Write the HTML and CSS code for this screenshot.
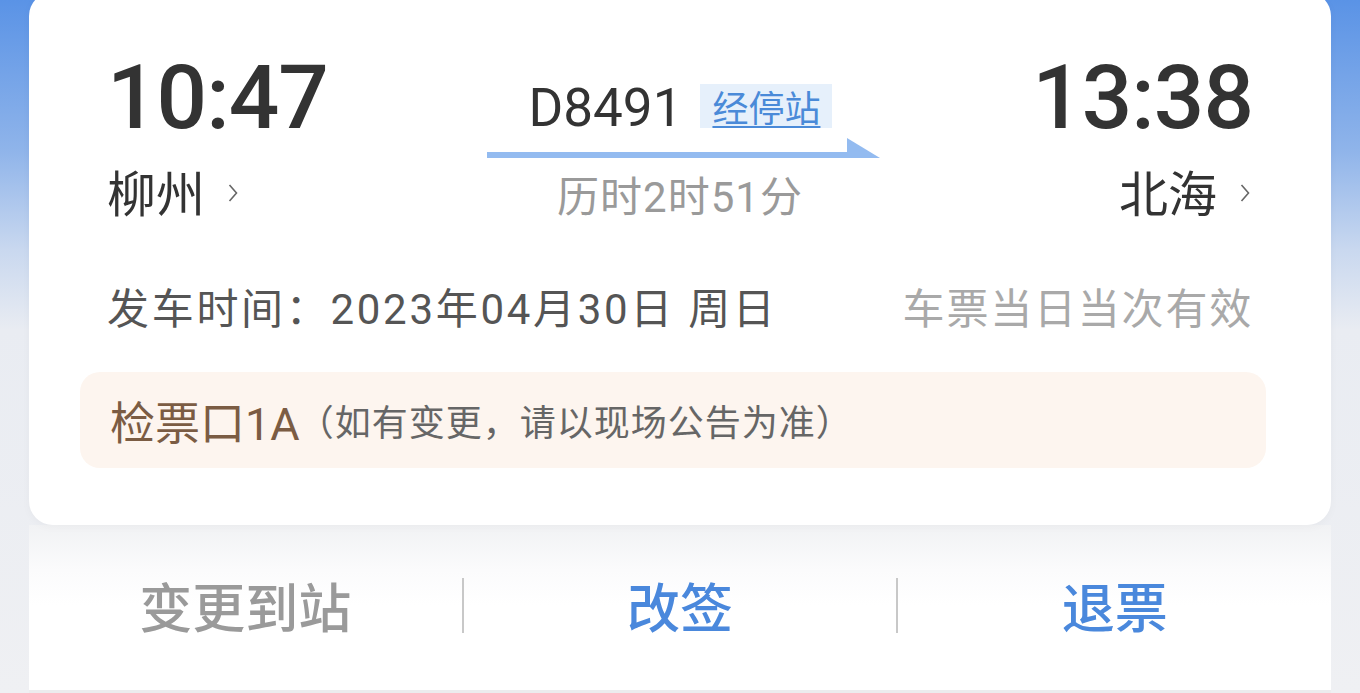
FILE: index.html
```html
<!DOCTYPE html>
<html lang="zh-CN">

<head>
  <meta charset="utf-8">
  <link rel="stylesheet" href="styles.css">
</head>

<body>
  <div class="page">
    <div class="ticket">
      <div class="route">
        <div class="stop">
          <div class="time">10:47</div>
          <div class="station">柳州
            <svg class="chevron" width="10" height="22" viewBox="0 0 10 22"><path d="M1.5 3 L8.5 11 L1.5 19" fill="none" stroke="#666" stroke-width="1.6"/></svg>
          </div>
        </div>

        <div class="train">
          <div class="train-head">
            <span class="train-no">D8491</span>
            <a class="stops" href="#">经停站</a>
          </div>
          <svg class="arrow" width="393" height="21" viewBox="0 0 393 21">
            <rect x="0" y="14" width="372" height="6" fill="#93bbf0"/>
            <polygon points="360,0 393,20 360,20" fill="#93bbf0"/>
          </svg>
          <div class="duration">历时2时51分</div>
        </div>

        <div class="stop stop-end">
          <div class="time">13:38</div>
          <div class="station">北海
            <svg class="chevron" width="10" height="22" viewBox="0 0 10 22"><path d="M1.5 3 L8.5 11 L1.5 19" fill="none" stroke="#666" stroke-width="1.6"/></svg>
          </div>
        </div>
      </div>

      <div class="date-row">
        <span class="depart">发车时间：2023年04月30日 周日</span>
        <span class="valid">车票当日当次有效</span>
      </div>

      <div class="gate">
        <span class="gate-no">检票口1A</span>
        <span class="gate-note">（如有变更，请以现场公告为准）</span>
      </div>
    </div>

    <div class="actions">
      <div class="action muted">变更到站</div>
      <div class="divider"></div>
      <div class="action">改签</div>
      <div class="divider"></div>
      <div class="action">退票</div>
    </div>
  </div>
</body>

</html>
```

FILE: styles.css
```css
body {
  margin: 0;
  height: 693px;
  overflow: hidden;
  font-family: Roboto, "Noto Sans CJK SC", sans-serif;
  color: #333;
  background: linear-gradient(180deg, #5a93e6 0px, #8fb4ea 150px, #c9d8ef 250px, #e9ecf2 330px, #eff0f3 693px);
}

.page {
  padding: 0 29px;
}

.ticket {
  margin-top: -8px;
  padding: 61px 78px 57px 78px;
  background-color: #fff;
  border-radius: 24px;
  box-shadow: 0 2px 10px rgba(0, 0, 0, 0.03);
  position: relative;
  z-index: 1;
}

.route {
  display: grid;
  grid-template-columns: 1fr auto 1fr;
  align-items: start;
}

.time {
  font-size: 89px;
  font-weight: 500;
  line-height: 1;
  letter-spacing: -1px;
  color: #333;
}

.stop-end {
  text-align: right;
}

.station {
  margin-top: 24px;
  display: flex;
  align-items: center;
  gap: 23px;
  font-family: "Noto Sans CJK SC", sans-serif;
  font-size: 49px;
  line-height: 50px;
  color: #333;
}

.stop-end .station {
  justify-content: flex-end;
  padding-right: 3px;
}

.chevron {
  margin-top: 4px;
}

.train {
  display: flex;
  flex-direction: column;
  align-items: center;
  padding-top: 31px;
}

.train-head {
  display: flex;
  align-items: flex-start;
  gap: 18px;
  margin-left: 1px;
}

.train-no {
  margin-top: 1px;
  font-size: 53px;
  line-height: 46px;
  color: #333;
}

.stops {
  font-family: "Noto Sans CJK SC", sans-serif;
  font-size: 36px;
  line-height: 44px;
  padding: 0 12px;
  color: #4a8ad8;
  background-color: #e6f0fb;
  text-decoration: underline;
  text-underline-offset: 4px;
  text-decoration-thickness: 2px;
}

.arrow {
  display: block;
  margin-top: 7px;
  margin-left: 6px;
}

.duration {
  margin-top: 14px;
  font-size: 42px;
  line-height: 50px;
  letter-spacing: 1px;
  color: #9a9a9a;
}

.date-row {
  margin-top: 62px;
  display: flex;
  justify-content: space-between;
  font-size: 42px;
  line-height: 50px;
  color: #555;
}

.depart {
  letter-spacing: 2.7px;
}

.valid {
  color: #a9a9a9;
  letter-spacing: 1.8px;
}

.gate {
  margin: 37px -13px 0 -27px;
  height: 96px;
  padding: 0 30px;
  display: flex;
  align-items: center;
  background-color: #fdf5ef;
  border-radius: 20px;
}

.gate-no {
  font-size: 45px;
  color: #7b5c43;
}

.gate-note {
  font-size: 36px;
  letter-spacing: 1px;
  color: #666;
  margin-left: -2px;
}

.actions {
  height: 168px;
  padding-bottom: 5px;
  box-sizing: border-box;
  display: flex;
  align-items: center;
  background: linear-gradient(180deg, #f1f2f4 0px, #fbfbfc 45px, #fff 80px);
  border-bottom: 3px solid #ececee;
}

.action {
  flex: 1;
  text-align: center;
  font-family: "Noto Sans CJK SC", sans-serif;
  font-size: 53px;
  font-weight: 500;
  color: #4a88dc;
}

.action.muted {
  color: #9a9a9a;
}

.divider {
  width: 2px;
  height: 55px;
  background-color: #c8c8c8;
}
```
